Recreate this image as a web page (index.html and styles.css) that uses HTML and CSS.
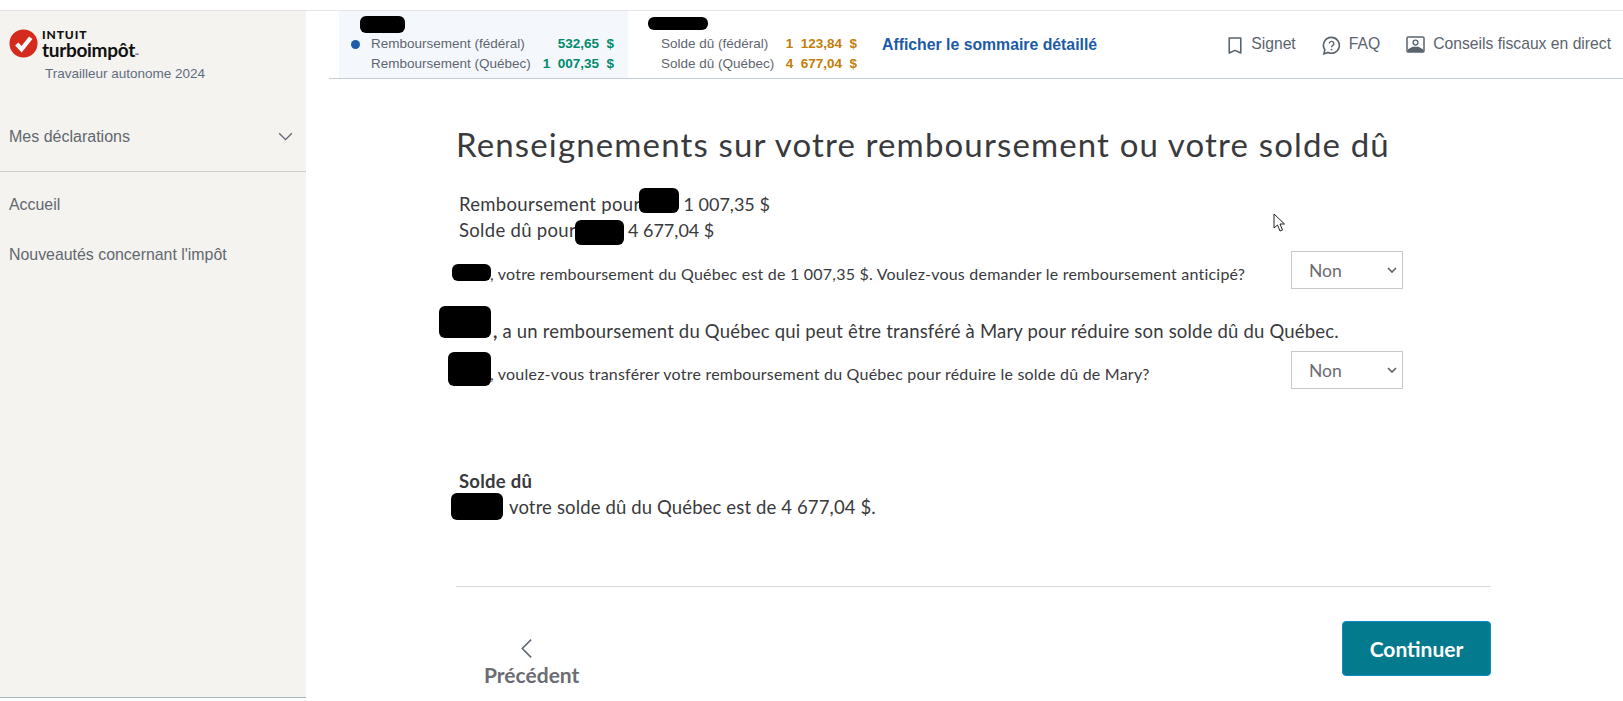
FILE: index.html
```html
<!DOCTYPE html>
<html lang="fr">

<head>
  <meta charset="UTF-8">
  <title>TurboImpôt</title>
  <link rel="stylesheet" href="styles.css">
</head>

<body>
  <div class="app">
    <!-- Sidebar -->
    <aside class="sidebar">
      <div class="brand">
        <svg class="brand-check" viewBox="0 0 30 30" width="29" height="29">
          <circle cx="15" cy="15" r="14.5" fill="#d52b1e"/>
          <path d="M8 15.5l5 5.5L22.5 9" fill="none" stroke="#fff" stroke-width="4.4"/>
        </svg>
        <div class="brand-text">
          <div class="brand-intuit">INTUIT</div>
          <div class="brand-name">turboimpôt<small>™</small></div>
        </div>
      </div>
      <div class="brand-sub">Travailleur autonome 2024</div>
      <div class="nav-returns">
        <span>Mes déclarations</span>
        <svg viewBox="0 0 16 10" width="15" height="9">
          <path d="M1 1.5l7 7 7-7" fill="none" stroke="#5f6670" stroke-width="1.5"/>
        </svg>
      </div>
      <nav class="nav-links">
        <a>Accueil</a>
        <a>Nouveautés concernant l'impôt</a>
      </nav>
    </aside>

    <!-- Main -->
    <main class="main">
      <header class="topbar">
        <div class="summary summary-refund">
          <span class="redact redact-a"></span>
          <div class="summary-row"><i class="dot"></i><span class="summary-label">Remboursement (fédéral)</span><b class="green">532,65&nbsp; $</b></div>
          <div class="summary-row summary-row-indent"><span class="summary-label">Remboursement (Québec)</span><b class="green">1&nbsp; 007,35&nbsp; $</b></div>
        </div>
        <div class="summary summary-due">
          <span class="redact redact-b"></span>
          <div class="summary-row"><span class="summary-label">Solde dû (fédéral)</span><b class="orange">1&nbsp; 123,84&nbsp; $</b></div>
          <div class="summary-row"><span class="summary-label">Solde dû (Québec)</span><b class="orange">4&nbsp; 677,04&nbsp; $</b></div>
        </div>
        <a class="detail-link">Afficher le sommaire détaillé</a>
        <div class="tools">
          <a class="tool">
            <svg viewBox="0 0 18 20" width="16" height="19"><path d="M2.5 1.5h13v17L9 15.5l-6.500 3z" fill="none" stroke="#5a646e" stroke-width="1.8" stroke-linejoin="round"/></svg>
            Signet
          </a>
          <a class="tool">
            <svg viewBox="0 0 20 20" width="19" height="19"><path d="M10 1.500a8.300 8.300 0 1 1-3.600 15.800L2 18.800l1-4.300A8.300 8.300 0 0 1 10 1.500z" fill="none" stroke="#5a646e" stroke-width="1.700"/><path d="M7.600 8a2.400 2.400 0 1 1 3.500 2.200c-.8.400-1.100.9-1.100 1.700" fill="none" stroke="#5a646e" stroke-width="1.500"/><circle cx="10" cy="14.300" r="1" fill="#5a646e"/></svg>
            FAQ
          </a>
          <a class="tool">
            <svg viewBox="0 0 20 18" width="19" height="17"><rect x="1" y="1" width="18" height="16" rx="1.500" fill="none" stroke="#5a646e" stroke-width="1.600"/><circle cx="10" cy="7" r="2.600" fill="none" stroke="#5a646e" stroke-width="1.400"/><path d="M2 17v-3l5-2.500h6l5 2.500v3z" fill="#5a646e"/></svg>
            Conseils fiscaux en direct
          </a>
        </div>
      </header>

      <section class="content">
        <h1>Renseignements sur votre remboursement ou votre solde dû</h1>

        <div class="totals">
          <div>Remboursement pour<span class="gap gap-c"></span><span class="amount">1 007,35 $</span><span class="redact redact-c"></span></div>
          <div>Solde dû pour<span class="gap gap-d"></span><span class="amount">4 677,04 $</span><span class="redact redact-d"></span></div>
        </div>

        <div class="question question-first">
          <p><span class="redact redact-e"></span>, votre remboursement du Québec est de 1 007,35 $. Voulez-vous demander le remboursement anticipé?</p>
          <div class="select">Non<svg viewBox="0 0 10 6" width="10" height="6"><path d="M1 1l4 4 4-4" fill="none" stroke="#5f6670" stroke-width="1.700"/></svg></div>
        </div>

        <p class="transfer"><span class="redact redact-f"></span><b>,</b> a un remboursement du Québec qui peut être transféré à Mary pour réduire son solde dû du Québec.</p>

        <div class="question question-second">
          <p><span class="redact redact-g"></span>, voulez-vous transférer votre remboursement du Québec pour réduire le solde dû de Mary?</p>
          <div class="select">Non<svg viewBox="0 0 10 6" width="10" height="6"><path d="M1 1l4 4 4-4" fill="none" stroke="#5f6670" stroke-width="1.700"/></svg></div>
        </div>

        <div class="balance">
          <h2>Solde dû</h2>
          <p><span class="redact redact-h"></span>votre solde dû du Québec est de 4 677,04 $.</p>
        </div>

        <div class="actions">
          <a class="back">
            <svg viewBox="0 0 14 22" width="13" height="21"><path d="M12 1.500L2.500 11l9.500 9.500" fill="none" stroke="#5f6b78" stroke-width="1.800"/></svg>
            Précédent
          </a>
          <button class="continue">Continuer</button>
        </div>
      </section>
    </main>
  </div>

  <!-- Mouse pointer caught in the screenshot -->
  <svg class="pointer" viewBox="0 0 13 19" width="13" height="19">
    <path d="M1 1v14l3.500-3 2.500 6 2.500-1-2.500-6h4.500z" fill="#fff" stroke="#222" stroke-width="1"/>
  </svg>
</body>

</html>
```

FILE: styles.css
```css
body {
  margin: 0;
  padding: 0;
  background: #fff;
  font-family: "Liberation Sans", Arial, sans-serif;
  color: #393a3d;
  overflow: hidden;
}

.app {
  display: flex;
  height: 687px;
  margin-top: 10px;
  border-top: 1px solid #e2e4e6;
}

/* Sidebar */
.sidebar {
  width: 306px;
  height: 686px;
  background: #f4f3ef;
  border-bottom: 3px solid #aab4bd;
  flex: none;
}

.brand {
  display: flex;
  gap: 4px;
  padding: 18px 0 0 9px;
}

.brand-text {
  color: #111;
  font-family: Lato, sans-serif;
}

.brand-intuit {
  font-size: 12px;
  font-weight: 900;
  letter-spacing: 0.9px;
  line-height: 12px;
}

.brand-name {
  font-size: 19px;
  font-weight: 700;
  line-height: 18px;
  letter-spacing: -0.3px;
}

.brand-name small {
  font-size: 5px;
  vertical-align: baseline;
}

.brand-sub {
  padding: 2px 0 0 45px;
  font-size: 13.500px;
  line-height: 15px;
  color: #5f6d80;
}

.nav-returns {
  display: flex;
  justify-content: space-between;
  align-items: center;
  height: 70px;
  padding: 0 13px 0 9px;
  margin-top: 21px;
  border-bottom: 1px solid #c9ccc9;
  box-sizing: border-box;
  font-size: 16px;
  color: #62686f;
}

.nav-links {
  display: flex;
  flex-direction: column;
  gap: 32px;
  padding: 24px 9px;
  font-size: 15.900px;
  line-height: 18px;
  color: #62686f;
}

/* Top summary bar */
.main {
  flex: 1;
  min-width: 0;
}

.topbar {
  display: flex;
  height: 67px;
  margin-left: 23px;
  padding-left: 10px;
  border-bottom: 1px solid #c3ced6;
  font-size: 13.500px;
  color: #5f6670;
}

.summary {
  box-sizing: border-box;
  padding-top: 23px;
}

.summary-refund {
  width: 289px;
  padding-left: 12px;
  padding-right: 14px;
  background: #f4f8fd;
}

.summary-due {
  width: 229px;
  padding-left: 33px;
}

.summary-row {
  display: flex;
  justify-content: space-between;
  align-items: center;
  height: 20px;
  line-height: 20px;
}

.summary-row-indent {
  padding-left: 20px;
}

.summary-row .summary-label {
  flex: 1;
}

.dot {
  width: 9px;
  height: 9px;
  margin-right: 11px;
  border-radius: 50%;
  background: #1f5ba8;
}

.summary-row b {
  font-weight: 700;
}

.green {
  color: #008a6c;
}

.orange {
  color: #c47e0a;
}

.detail-link {
  margin: 25px 0 0 25px;
  font-size: 15.800px;
  font-weight: 700;
  line-height: 18px;
  color: #1c5aa6;
}

.tools {
  display: flex;
  gap: 26px;
  margin-left: auto;
  padding: 24px 12px 0 0;
  font-size: 15.700px;
  color: #5a646e;
}

.tool {
  display: flex;
  align-items: flex-start;
  gap: 8px;
  line-height: 17px;
}

.tool svg {
  margin-top: 1px;
}

/* Content */
.content {
  width: 1035px;
  margin-left: 150px;
  font-family: Lato, sans-serif;
  color: #393a3d;
}

h1 {
  margin: 45px 0 0;
  font-size: 33px;
  font-weight: 400;
  line-height: 40px;
  letter-spacing: 1.140px;
}

.totals {
  margin: 27px 0 0 3px;
  font-size: 18.500px;
  line-height: 26px;
  letter-spacing: 0.3px;
}

.amount {
  font-size: 18px;
  letter-spacing: 0;
}

.gap {
  display: inline-block;
}

.gap-c {
  width: 43px;
}

.gap-d {
  width: 52px;
}

.question {
  display: flex;
  justify-content: space-between;
  align-items: center;
  width: 947px;
}

.question p {
  margin: 0;
  padding: 6px 0 0 34px;
  font-size: 16px;
  letter-spacing: 0.22px;
}

.question-first {
  margin-top: 8px;
}

.question-second {
  margin-top: 8px;
}

.select {
  display: flex;
  justify-content: space-between;
  align-items: center;
  width: 112px;
  height: 38px;
  box-sizing: border-box;
  padding: 0 5px 0 17px;
  border: 1px solid #c8c8c8;
  font-size: 17.500px;
  color: #6b6c72;
}

.transfer {
  margin: 30px 0 0 37px;
  font-size: 18.500px;
  line-height: 24px;
  letter-spacing: 0.19px;
}

.balance {
  margin: 79px 0 0 3px;
  font-size: 18.500px;
  line-height: 26px;
  letter-spacing: 0.13px;
}

.balance h2 {
  margin: 0;
  font-size: 18.500px;
  font-weight: 700;
  line-height: 26px;
  letter-spacing: 0.25px;
}

.balance p {
  margin: 0;
  padding-left: 50px;
}

.actions {
  display: flex;
  justify-content: space-between;
  margin-top: 66px;
  padding: 34px 0 0 28px;
  border-top: 1px solid #d8d9db;
}

.back {
  display: flex;
  flex-direction: column;
  align-items: center;
  gap: 3px;
  padding-top: 17px;
  font-size: 21px;
  font-weight: 700;
  line-height: 26px;
  color: #6b6c72;
}

.back svg {
  margin-right: 10px;
}

.continue {
  width: 149px;
  height: 55px;
  border: 1px solid #0d8dc4;
  border-radius: 4px;
  background: #047a8e;
  color: #fff;
  font-family: Lato, sans-serif;
  font-size: 21px;
  font-weight: 700;
}

/* Blacked out names */
.redact {
  position: absolute;
  background: #000;
  border-radius: 6px;
}

.redact-a { left: 360px; top: 16px; width: 45px; height: 17px; }
.redact-b { left: 648px; top: 17px; width: 60px; height: 13px; }
.redact-c { left: 639px; top: 188px; width: 40px; height: 25px; }
.redact-d { left: 575px; top: 220px; width: 49px; height: 25px; }
.redact-e { left: 452px; top: 264px; width: 39px; height: 17px; }
.redact-f { left: 439px; top: 306px; width: 52px; height: 32px; }
.redact-g { left: 448px; top: 352px; width: 43px; height: 34px; }
.redact-h { left: 451px; top: 493px; width: 52px; height: 27px; }

.pointer {
  position: absolute;
  left: 1273px;
  top: 213px;
}
```
